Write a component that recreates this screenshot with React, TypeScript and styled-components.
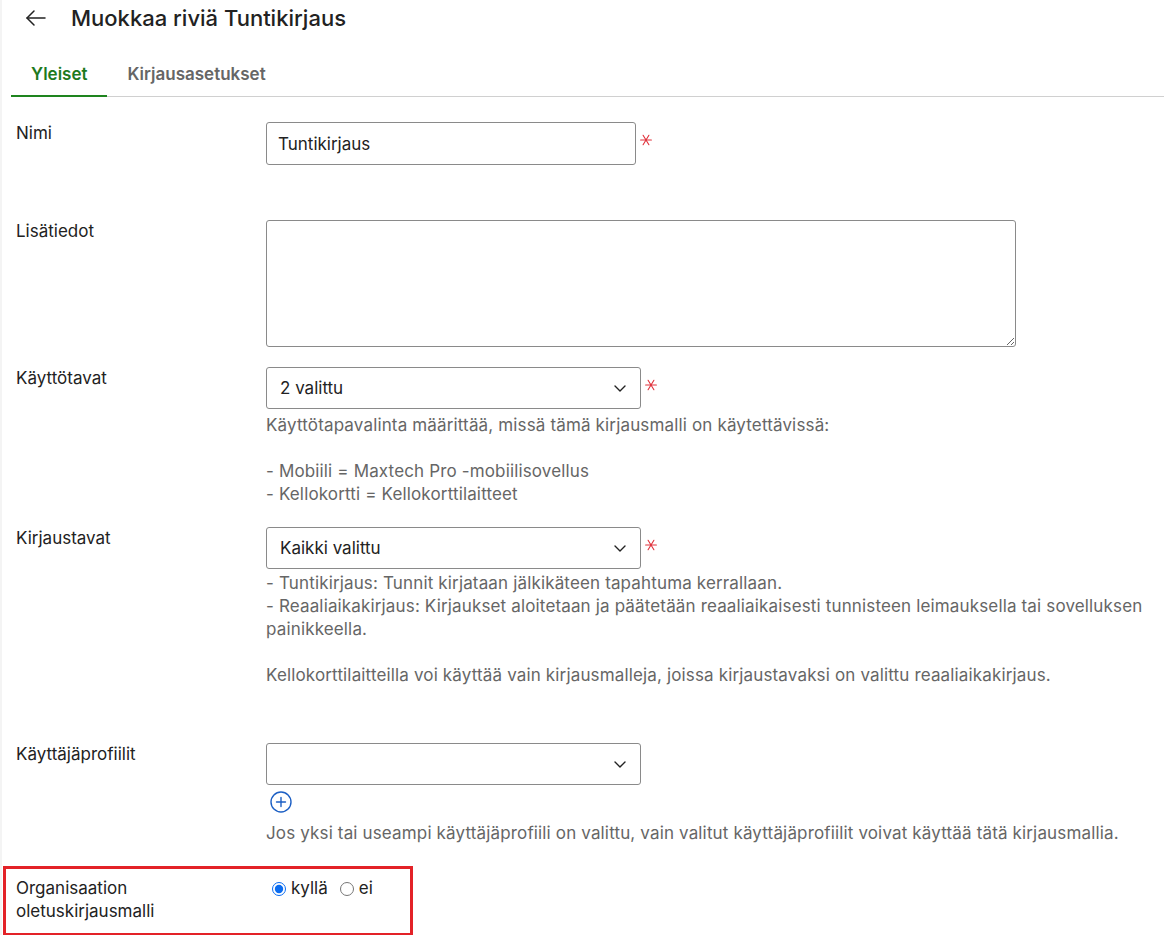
import React from "react";
import styled, { createGlobalStyle } from "styled-components";

const Global = createGlobalStyle`
  html, body { margin: 0; padding: 0; background: #fff; }
  body { font-family: Inter, "Noto Sans", "Liberation Sans", sans-serif; color: #222; }
  * { box-sizing: border-box; }
`;

const Page = styled.div`
  width: 1165px;
  min-height: 935px;
  padding: 0 1px 0 11px;
  box-shadow: inset 2px 0 0 #f4f4f4;
`;

const Header = styled.header`
  display: flex;
  align-items: center;
  height: 36px;
  padding-left: 11px;
  gap: 21px;
`;

const BackButton = styled.button`
  display: flex;
  align-items: center;
  justify-content: center;
  width: 28px;
  height: 28px;
  padding: 0;
  border: 0;
  background: none;
  color: #222;
  cursor: pointer;
`;

const Title = styled.h1`
  margin: 0;
  font-size: 22px;
  font-weight: 500;
  color: #222;
`;

const Tabs = styled.nav`
  display: flex;
  margin-top: 13px;
  border-bottom: 1px solid #d0d0d0;
`;

const Tab = styled.button<{ $active?: boolean }>`
  font-family: inherit;
  font-size: 17px;
  font-weight: 600;
  line-height: 22px;
  padding: 14px 20px 10px;
  margin-bottom: -1px;
  border: 0;
  border-bottom: 2px solid ${(p) => (p.$active ? "#1e841e" : "transparent")};
  background: none;
  color: ${(p) => (p.$active ? "#1e7a1e" : "#666")};
  cursor: pointer;
`;

const Form = styled.form`
  display: flex;
  flex-direction: column;
  padding: 25px 0 0 5px;
`;

const Row = styled.div<{ $after: number }>`
  display: grid;
  grid-template-columns: 250px 1fr;
  margin-bottom: ${(p) => p.$after}px;
`;

const Label = styled.label`
  font-size: 17px;
  line-height: 23px;
  color: #222;
`;

const Control = styled.div`
  display: flex;
  flex-direction: column;
  align-items: flex-start;
`;

const FieldLine = styled.div`
  display: flex;
  align-items: flex-start;
  gap: 4px;
`;

const TextInput = styled.input`
  width: 370px;
  height: 43px;
  padding: 0 11px;
  font-family: inherit;
  font-size: 17px;
  color: #222;
  border: 1px solid #8a8a8a;
  border-radius: 3px;
  outline: none;
`;

const TextArea = styled.textarea`
  width: 750px;
  height: 127px;
  padding: 8px 11px;
  font-family: inherit;
  font-size: 17px;
  border: 1px solid #8a8a8a;
  border-radius: 3px;
  outline: none;
`;

const Select = styled.div`
  display: flex;
  align-items: center;
  justify-content: space-between;
  width: 375px;
  height: 42px;
  padding: 0 13px 0 13px;
  font-size: 17px;
  color: #222;
  border: 1px solid #8a8a8a;
  border-radius: 3px;
  background: #fff;
`;

const Required = styled.span`
  display: flex;
  padding-top: 12px;
  color: #e0303a;
`;

const Help = styled.div<{ $top: number }>`
  margin-top: ${(p) => p.$top}px;
  font-size: 17px;
  line-height: 23px;
  letter-spacing: 0.15px;
  color: #666;
  white-space: pre-line;
  max-width: 898px;
`;

const AddButton = styled.button`
  display: flex;
  margin: 6px 0 0 4px;
  padding: 0;
  border: 0;
  background: none;
  color: #1c5fc4;
  cursor: pointer;
`;

const Highlight = styled.div`
  display: grid;
  grid-template-columns: 250px 1fr;
  width: 410px;
  margin-left: -13px;
  padding: 8px 10px 10px;
  border: 3px solid #e32228;
`;

const RadioGroup = styled.div`
  display: flex;
  align-items: center;
  align-self: start;
  font-size: 17px;
  line-height: 23px;
  color: #222;
`;

const RadioLabel = styled.label`
  display: flex;
  align-items: center;
  margin-right: 6px;
  input { margin: 0 5px 0 6px; width: 14px; height: 14px; accent-color: #0b6cf0; }
`;

const ArrowLeft = () => (
  <svg width="24" height="24" viewBox="0 0 24 24" fill="none" stroke="currentColor" strokeWidth="1.5" strokeLinecap="round" strokeLinejoin="round">
    <path d="M21 12H3" />
    <path d="M10 5l-7 7 7 7" />
  </svg>
);

const Chevron = () => (
  <svg width="14" height="14" viewBox="0 0 14 14" fill="none" stroke="#222" strokeWidth="1.4" strokeLinecap="round" strokeLinejoin="round">
    <path d="M2 5l5 5 5-5" />
  </svg>
);

const Star = () => (
  <svg width="12" height="12" viewBox="0 0 12 12" stroke="currentColor" strokeWidth="1.1" strokeLinecap="round">
    <path d="M0.6 6h10.8" />
    <path d="M3.1 1.3l5.8 9.4" />
    <path d="M8.9 1.3l-5.8 9.4" />
  </svg>
);

const PlusCircle = () => (
  <svg width="22" height="22" viewBox="0 0 22 22" fill="none" stroke="currentColor" strokeWidth="1.4" strokeLinecap="round">
    <circle cx="11" cy="11" r="10" />
    <path d="M11 6.5v9M6.5 11h9" />
  </svg>
);

export default function App() {
  return (
    <Page>
      <Global />
      <Header>
        <BackButton type="button" aria-label="Takaisin">
          <ArrowLeft />
        </BackButton>
        <Title>Muokkaa riviä Tuntikirjaus</Title>
      </Header>

      <Tabs>
        <Tab type="button" $active>Yleiset</Tab>
        <Tab type="button">Kirjausasetukset</Tab>
      </Tabs>

      <Form onSubmit={(e) => e.preventDefault()}>
        <Row $after={55}>
          <Label>Nimi</Label>
          <Control>
            <FieldLine>
              <TextInput defaultValue="Tuntikirjaus" />
              <Required><Star /></Required>
            </FieldLine>
          </Control>
        </Row>

        <Row $after={20}>
          <Label>Lisätiedot</Label>
          <Control>
            <TextArea />
          </Control>
        </Row>

        <Row $after={21}>
          <Label>Käyttötavat</Label>
          <Control>
            <FieldLine>
              <Select>
                <span>2 valittu</span>
                <Chevron />
              </Select>
              <Required><Star /></Required>
            </FieldLine>
            <Help $top={5}>
              {"Käyttötapavalinta määrittää, missä tämä kirjausmalli on käytettävissä:\n\n- Mobiili = Maxtech Pro -mobiilisovellus\n- Kellokortti = Kellokorttilaitteet"}
            </Help>
          </Control>
        </Row>

        <Row $after={56}>
          <Label>Kirjaustavat</Label>
          <Control>
            <FieldLine>
              <Select>
                <span>Kaikki valittu</span>
                <Chevron />
              </Select>
              <Required><Star /></Required>
            </FieldLine>
            <Help $top={3}>
              {"- Tuntikirjaus: Tunnit kirjataan jälkikäteen tapahtuma kerrallaan.\n- Reaaliaikakirjaus: Kirjaukset aloitetaan ja päätetään reaaliaikaisesti tunnisteen leimauksella tai sovelluksen painikkeella.\n\nKellokorttilaitteilla voi käyttää vain kirjausmalleja, joissa kirjaustavaksi on valittu reaaliaikakirjaus."}
            </Help>
          </Control>
        </Row>

        <Row $after={21}>
          <Label>Käyttäjäprofiilit</Label>
          <Control>
            <Select>
              <span />
              <Chevron />
            </Select>
            <AddButton type="button" aria-label="Lisää">
              <PlusCircle />
            </AddButton>
            <Help $top={9}>
              Jos yksi tai useampi käyttäjäprofiili on valittu, vain valitut käyttäjäprofiilit voivat käyttää tätä kirjausmallia.
            </Help>
          </Control>
        </Row>

        <Highlight>
          <Label>
            Organisaation
            <br />
            oletuskirjausmalli
          </Label>
          <RadioGroup>
            <RadioLabel>
              <input type="radio" name="oletus" defaultChecked />
              kyllä
            </RadioLabel>
            <RadioLabel>
              <input type="radio" name="oletus" />
              ei
            </RadioLabel>
          </RadioGroup>
        </Highlight>
      </Form>
    </Page>
  );
}
